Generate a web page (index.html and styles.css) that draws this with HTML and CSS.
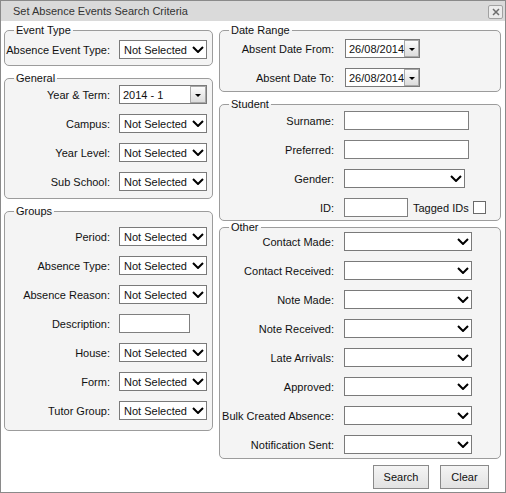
FILE: index.html
```html
<!DOCTYPE html>
<html>
<head>
<meta charset="utf-8">
<title>Set Absence Events Search Criteria</title>
<link rel="stylesheet" href="styles.css">
</head>
<body>
<div class="window">
  <div class="titlebar">
    <span class="title">Set Absence Events Search Criteria</span>
    <span class="close"><svg width="8" height="8" viewBox="0 0 8 8"><path d="M1 1L7 7M7 1L1 7" stroke="#6e6e6e" stroke-width="1.5" fill="none"/></svg></span>
  </div>
  <div class="body">
    <div class="col col-left">
      <fieldset class="fs fs-event">
        <legend>Event Type</legend>
        <div class="rows rows-l">
          <label class="lbl">Absence Event Type:</label>
          <div class="select w-l"><span>Not Selected</span><svg class="chev" width="12" height="7" viewBox="0 0 12 7"><path d="M1 1L6 6L11 1" stroke="#000" stroke-width="2" fill="none"/></svg></div>
        </div>
      </fieldset>
      <fieldset class="fs fs-general">
        <legend>General</legend>
        <div class="rows rows-l">
          <label class="lbl">Year &amp; Term:</label>
          <div class="combo w-l"><span>2014 - 1</span><span class="combo-btn"><span class="tri"></span></span></div>
          <label class="lbl">Campus:</label>
          <div class="select w-l"><span>Not Selected</span><svg class="chev" width="12" height="7" viewBox="0 0 12 7"><path d="M1 1L6 6L11 1" stroke="#000" stroke-width="2" fill="none"/></svg></div>
          <label class="lbl">Year Level:</label>
          <div class="select w-l"><span>Not Selected</span><svg class="chev" width="12" height="7" viewBox="0 0 12 7"><path d="M1 1L6 6L11 1" stroke="#000" stroke-width="2" fill="none"/></svg></div>
          <label class="lbl">Sub School:</label>
          <div class="select w-l"><span>Not Selected</span><svg class="chev" width="12" height="7" viewBox="0 0 12 7"><path d="M1 1L6 6L11 1" stroke="#000" stroke-width="2" fill="none"/></svg></div>
        </div>
      </fieldset>
      <fieldset class="fs fs-groups">
        <legend>Groups</legend>
        <div class="rows rows-l">
          <label class="lbl">Period:</label>
          <div class="select w-l"><span>Not Selected</span><svg class="chev" width="12" height="7" viewBox="0 0 12 7"><path d="M1 1L6 6L11 1" stroke="#000" stroke-width="2" fill="none"/></svg></div>
          <label class="lbl">Absence Type:</label>
          <div class="select w-l"><span>Not Selected</span><svg class="chev" width="12" height="7" viewBox="0 0 12 7"><path d="M1 1L6 6L11 1" stroke="#000" stroke-width="2" fill="none"/></svg></div>
          <label class="lbl">Absence Reason:</label>
          <div class="select w-l"><span>Not Selected</span><svg class="chev" width="12" height="7" viewBox="0 0 12 7"><path d="M1 1L6 6L11 1" stroke="#000" stroke-width="2" fill="none"/></svg></div>
          <label class="lbl">Description:</label>
          <input class="input w-desc" type="text">
          <label class="lbl">House:</label>
          <div class="select w-l"><span>Not Selected</span><svg class="chev" width="12" height="7" viewBox="0 0 12 7"><path d="M1 1L6 6L11 1" stroke="#000" stroke-width="2" fill="none"/></svg></div>
          <label class="lbl">Form:</label>
          <div class="select w-l"><span>Not Selected</span><svg class="chev" width="12" height="7" viewBox="0 0 12 7"><path d="M1 1L6 6L11 1" stroke="#000" stroke-width="2" fill="none"/></svg></div>
          <label class="lbl">Tutor Group:</label>
          <div class="select w-l"><span>Not Selected</span><svg class="chev" width="12" height="7" viewBox="0 0 12 7"><path d="M1 1L6 6L11 1" stroke="#000" stroke-width="2" fill="none"/></svg></div>
        </div>
      </fieldset>
    </div>
    <div class="col col-right">
      <fieldset class="fs fs-date">
        <legend>Date Range</legend>
        <div class="rows rows-r">
          <label class="lbl">Absent Date From:</label>
          <div class="combo w-date"><span>26/08/2014</span><span class="combo-btn"><span class="tri"></span></span></div>
          <label class="lbl">Absent Date To:</label>
          <div class="combo w-date"><span>26/08/2014</span><span class="combo-btn"><span class="tri"></span></span></div>
        </div>
      </fieldset>
      <fieldset class="fs fs-student">
        <legend>Student</legend>
        <div class="rows rows-r">
          <label class="lbl">Surname:</label>
          <input class="input w-name" type="text">
          <label class="lbl">Preferred:</label>
          <input class="input w-name" type="text">
          <label class="lbl">Gender:</label>
          <div class="select w-gender"><span></span><svg class="chev" width="12" height="7" viewBox="0 0 12 7"><path d="M1 1L6 6L11 1" stroke="#000" stroke-width="2" fill="none"/></svg></div>
          <label class="lbl">ID:</label>
          <div class="id-row">
            <input class="input w-id" type="text">
            <span class="tagged">Tagged IDs</span>
            <input class="check" type="checkbox">
          </div>
        </div>
      </fieldset>
      <fieldset class="fs fs-other">
        <legend>Other</legend>
        <div class="rows rows-r">
          <label class="lbl">Contact Made:</label>
          <div class="select w-other"><span></span><svg class="chev" width="12" height="7" viewBox="0 0 12 7"><path d="M1 1L6 6L11 1" stroke="#000" stroke-width="2" fill="none"/></svg></div>
          <label class="lbl">Contact Received:</label>
          <div class="select w-other"><span></span><svg class="chev" width="12" height="7" viewBox="0 0 12 7"><path d="M1 1L6 6L11 1" stroke="#000" stroke-width="2" fill="none"/></svg></div>
          <label class="lbl">Note Made:</label>
          <div class="select w-other"><span></span><svg class="chev" width="12" height="7" viewBox="0 0 12 7"><path d="M1 1L6 6L11 1" stroke="#000" stroke-width="2" fill="none"/></svg></div>
          <label class="lbl">Note Received:</label>
          <div class="select w-other"><span></span><svg class="chev" width="12" height="7" viewBox="0 0 12 7"><path d="M1 1L6 6L11 1" stroke="#000" stroke-width="2" fill="none"/></svg></div>
          <label class="lbl">Late Arrivals:</label>
          <div class="select w-other"><span></span><svg class="chev" width="12" height="7" viewBox="0 0 12 7"><path d="M1 1L6 6L11 1" stroke="#000" stroke-width="2" fill="none"/></svg></div>
          <label class="lbl">Approved:</label>
          <div class="select w-other"><span></span><svg class="chev" width="12" height="7" viewBox="0 0 12 7"><path d="M1 1L6 6L11 1" stroke="#000" stroke-width="2" fill="none"/></svg></div>
          <label class="lbl">Bulk Created Absence:</label>
          <div class="select w-other"><span></span><svg class="chev" width="12" height="7" viewBox="0 0 12 7"><path d="M1 1L6 6L11 1" stroke="#000" stroke-width="2" fill="none"/></svg></div>
          <label class="lbl">Notification Sent:</label>
          <div class="select w-other"><span></span><svg class="chev" width="12" height="7" viewBox="0 0 12 7"><path d="M1 1L6 6L11 1" stroke="#000" stroke-width="2" fill="none"/></svg></div>
        </div>
      </fieldset>
      <div class="actions">
        <button class="btn btn-search" type="button">Search</button>
        <button class="btn btn-clear" type="button">Clear</button>
      </div>
    </div>
  </div>
</div>
</body>
</html>
```
FILE: styles.css
```css
* { box-sizing: border-box; }
html, body { margin: 0; padding: 0; background: #fff; }
body {
  width: 506px;
  height: 493px;
  overflow: hidden;
  font-family: "Liberation Sans", Arial, sans-serif;
  font-size: 11px;
  color: #111;
}
.window {
  width: 506px;
  height: 493px;
  border: 1px solid #8a8a8a;
  background: #fff;
  display: flex;
  flex-direction: column;
}
.titlebar {
  flex: none;
  height: 20px;
  background: #dadada;
  display: flex;
  align-items: center;
  justify-content: space-between;
  padding: 0 2px 0 12px;
  color: #333;
}
.close {
  width: 15px;
  height: 14px;
  margin-top: 1px;
  border: 1px solid #a2a2a2;
  border-radius: 2px;
  background: #ececec;
  display: flex;
  align-items: center;
  justify-content: center;
}
.body {
  display: flex;
  gap: 6px;
  padding: 3px 4px 0 3px;
}
.col { display: flex; flex-direction: column; }
.col-left { width: 209px; }
.col-right { width: 282px; }

.fs {
  margin: 0;
  min-width: 0;
  padding: 0;
  border: 1px solid #9c9c9c;
  border-radius: 5px;
  background: #f4f4f4;
}
.fs legend {
  margin-left: 9px;
  padding: 0 2px;
  line-height: 13px;
  color: #111;
}
.fs-event { padding: 3px 0 6px; }
.fs-general { margin-top: 6px; padding: 0 0 7px; }
.fs-groups { margin-top: 6px; padding: 9px 0 10px; }
.fs-date { padding: 2px 0 4px; }
.fs-student { margin-top: 6px; padding: 0 0 3px; }
.fs-other { padding: 0 0 4px; }
.fs-other .rows { margin-top: -2px; }

.rows {
  display: grid;
  grid-auto-rows: 19px;
  row-gap: 10px;
  align-items: center;
}
.rows-l { grid-template-columns: 105px auto; column-gap: 9px; }
.rows-r { grid-template-columns: 114px auto; column-gap: 10px; }
.lbl { justify-self: end; white-space: nowrap; }
.rows > :not(.lbl) { justify-self: start; }

.select {
  height: 19px;
  border: 1px solid #7a7a7a;
  background: #fff;
  display: flex;
  align-items: center;
  justify-content: space-between;
  padding: 0 2px 0 4px;
  white-space: nowrap;
}
.chev { flex: none; }
.w-l { width: 88px; }
.w-gender { width: 121px; }
.w-other { width: 128px; }

.combo {
  height: 19px;
  border: 1px solid #7a7a7a;
  background: #fff;
  display: flex;
  align-items: center;
  justify-content: space-between;
  padding: 0 0 0 3px;
}
.combo-btn {
  width: 16px;
  height: 17px;
  border: 1px solid #a8a8a8;
  background: linear-gradient(#fbfbfb, #dcdcdc);
  display: flex;
  align-items: center;
  justify-content: center;
}
.tri {
  width: 0;
  height: 0;
  border-left: 3px solid transparent;
  border-right: 3px solid transparent;
  border-top: 3px solid #000;
  margin-top: 2px;
}
.w-date { width: 75px; margin-left: 1px; }

.input {
  height: 19px;
  margin: 0;
  padding: 0 3px;
  border: 1px solid #7f7f7f;
  border-radius: 0;
  background: #fff;
  font: inherit;
}
.w-desc { width: 71px; }
.w-name { width: 125px; }
.w-id { width: 64px; }

.id-row { display: flex; align-items: center; }
.tagged { margin-left: 5px; }
.check {
  appearance: none;
  -webkit-appearance: none;
  width: 13px;
  height: 13px;
  margin: 0 0 0 4px;
  border: 1px solid #6a6a6a;
  background: #fff;
}

.actions {
  display: flex;
  justify-content: flex-end;
  gap: 11px;
  margin-top: 6px;
  padding-right: 12px;
}
.btn {
  height: 24px;
  padding: 0;
  border: 1px solid #8a8a8a;
  border-radius: 0;
  background: linear-gradient(#f4f4f4, #e2e2e2);
  font: inherit;
  color: #111;
}
.btn-search { width: 56px; }
.btn-clear { width: 49px; }
```
